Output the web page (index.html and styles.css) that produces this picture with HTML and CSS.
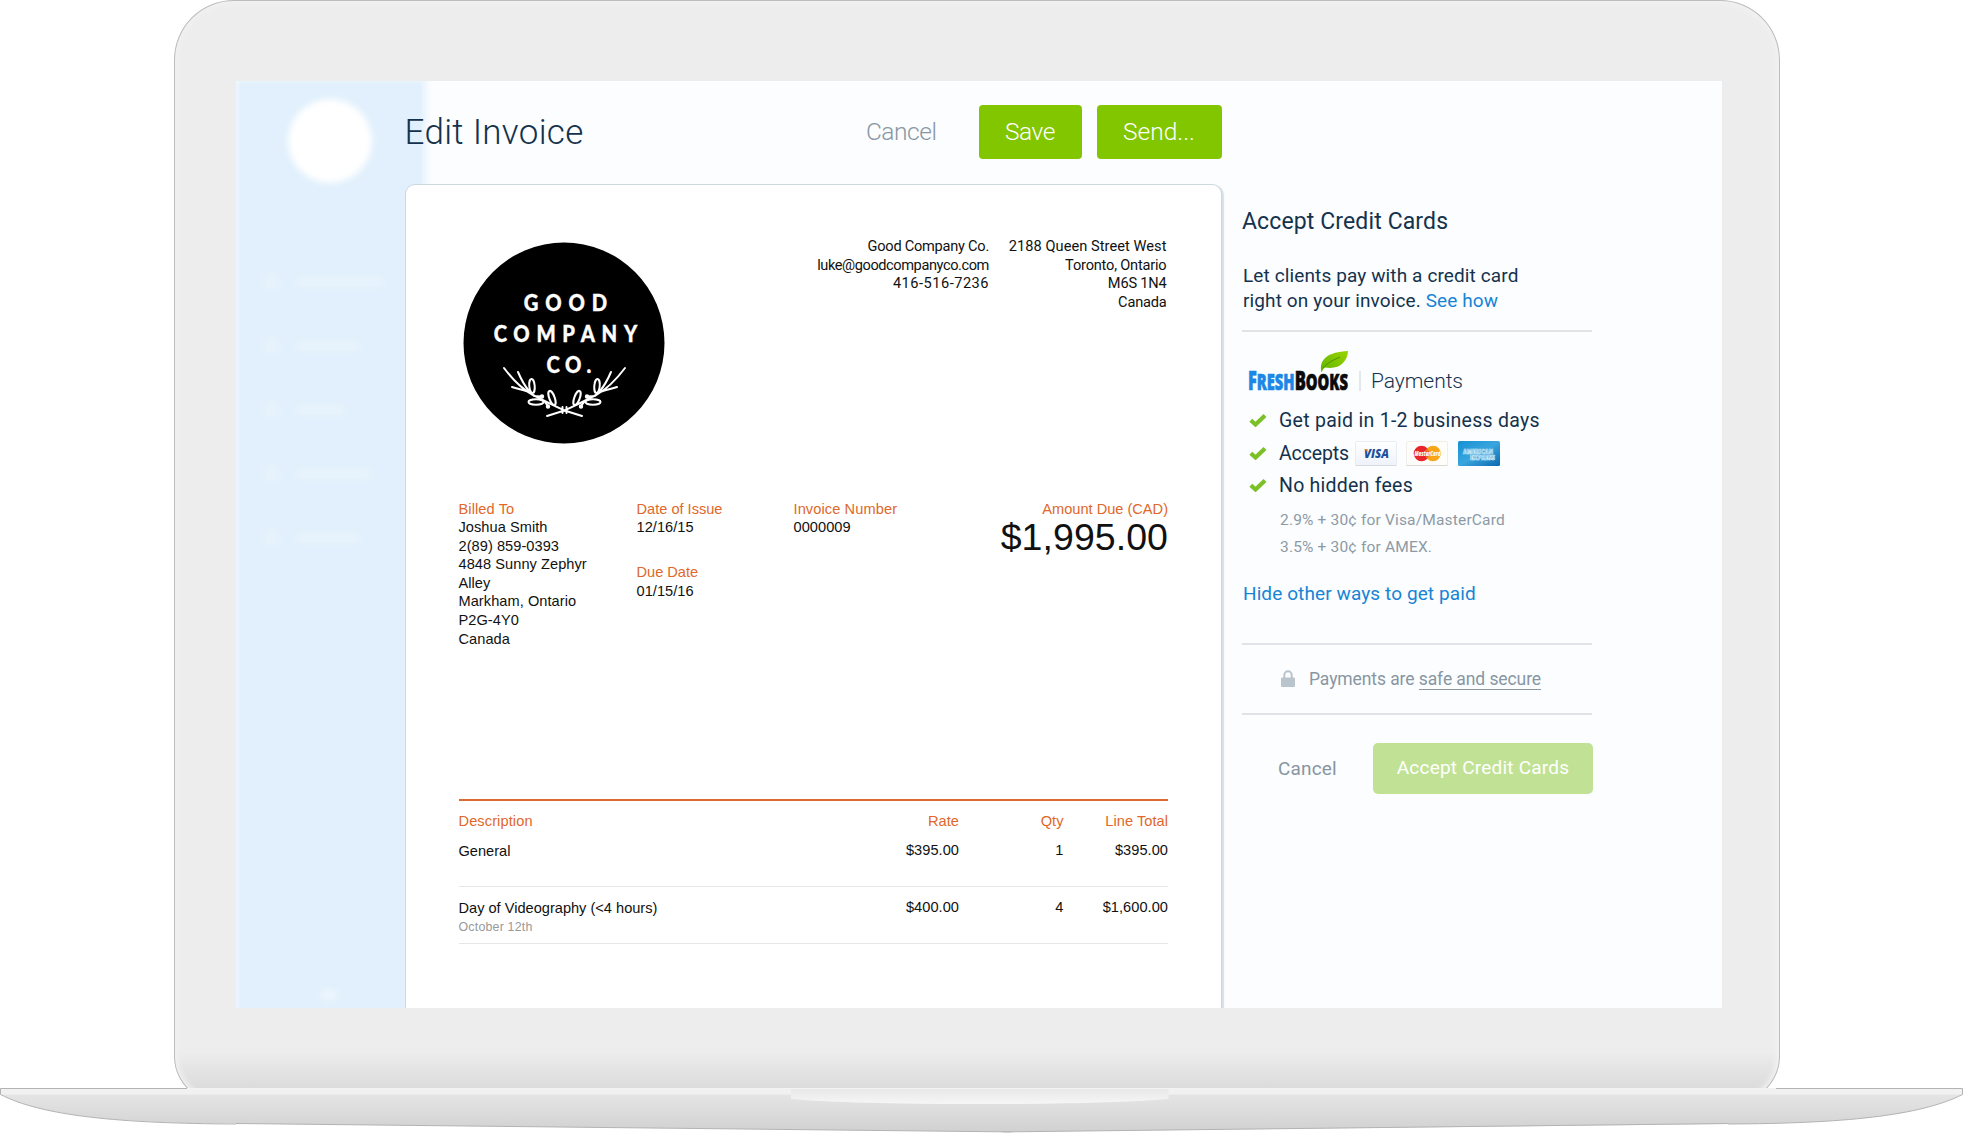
FILE: index.html
```html
<!DOCTYPE html>
<html lang="en">
<head>
<meta charset="utf-8">
<title>Edit Invoice</title>
<link rel="stylesheet" href="styles.css">
</head>
<body>
<div class="laptop">
  <div class="lid-clip">
    <div class="lid">
      <div class="screen">
        <nav class="sidebar">
          <span class="avatar"></span>
          <ul class="nav">
            <li><i></i><b class="w1"></b></li>
            <li><i></i><b class="w2"></b></li>
            <li><i></i><b class="w3"></b></li>
            <li><i></i><b class="w4"></b></li>
            <li><i></i><b class="w2"></b></li>
          </ul>
          <span class="toggle"></span>
        </nav>

        <main class="main">
          <header class="topbar">
            <h1>Edit Invoice</h1>
            <a class="cancel">Cancel</a>
            <button class="btn save">Save</button>
            <button class="btn send">Send...</button>
          </header>

          <section class="invoice">
            <div class="company">
              <svg class="logo" width="202" height="202" viewBox="-1 -1 202 202">
                <circle cx="100" cy="100" r="100.5" fill="#000"/>
                <g fill="#fff" stroke="#fff" stroke-width=".4" font-family="Lato, sans-serif" font-weight="900" font-size="23.5" transform="scale(.86 1)">
                  <text x="69.500" y="68.500" textLength="97">GOOD</text>
                  <text x="34.500" y="99.500" textLength="167">COMPANY</text>
                  <text x="96" y="130" textLength="52">CO.</text>
                </g>
                <g fill="none" stroke="#fff" stroke-width="2" stroke-linecap="round">
                  <g id="branch">
                    <path d="M40 125C49 137 58 146 69 152C80 158 89 162 99 167L118 173M54 129C57 136 60 142 65 148M48 144C54 146 60 147 65 149M70 153L78 153.5M80 158L84 163"/>
                    <ellipse cx="68" cy="143" rx="2.700" ry="7" transform="rotate(-5 68 143)"/>
                    <ellipse cx="72" cy="159" rx="7.500" ry="2.700"/>
                    <ellipse cx="88" cy="155" rx="2.700" ry="7.500" transform="rotate(-20 88 155)"/>
                    <circle cx="78" cy="153.500" r="1.200" fill="#fff"/>
                    <circle cx="84" cy="163.500" r="1.200" fill="#fff"/>
                  </g>
                  <use href="#branch" transform="matrix(-1 0 0 1 201 0)"/>
                  <path d="M98.500 164V170M102.500 164V170"/>
                </g>
              </svg>
              <address class="contact">
                <span class="n1">Good Company Co.</span>
                <span class="n2">luke@goodcompanyco.com</span>
                <span class="n3">416-516-7236</span>
              </address>
              <address class="street">
                <span>2188 Queen Street West</span>
                <span>Toronto, Ontario</span>
                <span>M6S 1N4</span>
                <span>Canada</span>
              </address>
            </div>

            <div class="details">
              <div class="field client">
                <h2>Billed To</h2>
                <p>Joshua Smith<br>2(89) 859-0393<br>4848 Sunny Zephyr<br>Alley<br>Markham, Ontario<br>P2G-4Y0<br>Canada</p>
              </div>
              <div class="dates">
                <div class="field"><h2>Date of Issue</h2><p>12/16/15</p></div>
                <div class="field"><h2>Due Date</h2><p>01/15/16</p></div>
              </div>
              <div class="field"><h2>Invoice Number</h2><p>0000009</p></div>
              <div class="field amount"><h2>Amount Due (CAD)</h2><p>$1,995.00</p></div>
            </div>

            <div class="lines">
              <div class="row head"><span>Description</span><span>Rate</span><span>Qty</span><span>Line Total</span></div>
              <div class="row first"><span>General</span><span>$395.00</span><span>1</span><span>$395.00</span></div>
              <div class="row second"><span>Day of Videography (&lt;4 hours)<small>October 12th</small></span><span>$400.00</span><span>4</span><span>$1,600.00</span></div>
            </div>
          </section>
        </main>

        <aside class="panel">
          <h2 class="title">Accept Credit Cards</h2>
          <p class="intro">Let clients pay with a credit card<br>right on your invoice. <a>See how</a></p>
          <hr>
          <div class="brand">
            <svg width="102" height="44" viewBox="0 0 102 44">
              <defs><linearGradient id="leaf" x1="0" y1="1" x2="1" y2="0"><stop offset="0" stop-color="#5fb400"/><stop offset="1" stop-color="#9ad400"/></linearGradient></defs>
              <text x="0" y="39.500" textLength="100" lengthAdjust="spacingAndGlyphs" font-family="'Open Sans', sans-serif" font-weight="800" stroke-width=".7" font-size="23.500"><tspan fill="#1c87e5" stroke="#1c87e5"><tspan font-size="26">F</tspan>RESH</tspan><tspan fill="#0a0a0a" stroke="#0a0a0a"><tspan font-size="26.500">B</tspan>OOKS</tspan></text>
              <path d="M73 20C72 9 80 2 100 1C99.500 12 91 20 77 17.500Q75 18.500 73.500 22.500Z" fill="url(#leaf)"/>
              <path d="M75 18C80 12 85 10.500 92 7" fill="none" stroke="#4a9400" stroke-width="1"/>
            </svg>
            <span class="product">Payments</span>
          </div>
          <ul class="perks">
            <li><svg class="check" viewBox="0 0 18 14"><path d="M1.800 7.200L6.500 11.500L16 2.500"/></svg><span class="p1">Get paid in 1-2 business days</span></li>
            <li><svg class="check" viewBox="0 0 18 14"><path d="M1.800 7.200L6.500 11.500L16 2.500"/></svg><span class="p2">Accepts</span>
              <span class="cards">
                <svg width="42" height="25" viewBox="0 0 42 25"><defs><linearGradient id="vs" x2="0" y2="1"><stop offset="0" stop-color="#fff"/><stop offset="1" stop-color="#eef2f9"/></linearGradient></defs><rect x=".5" y=".5" width="41" height="24" rx="1.500" fill="url(#vs)" stroke="#e9ecf2"/><path d="M.5 24.500H41.500" stroke="#d5dae3"/><text x="9" y="17.300" textLength="25" lengthAdjust="spacingAndGlyphs" font-family="'Open Sans', sans-serif" font-style="italic" font-weight="800" font-size="12.500" fill="#1c4f9c">VISA</text><path d="M9 8.300H12.500L13.500 11Z" fill="#f0a020"/></svg>
                <svg width="42" height="25" viewBox="0 0 42 25"><rect x=".5" y=".5" width="41" height="24" rx="1.500" fill="#fffdfa" stroke="#f1edea"/><path d="M.5 24.500H41.500" stroke="#ddd8d4"/><circle cx="15.500" cy="12.500" r="7.800" fill="#e8252b"/><circle cx="27" cy="12.500" r="7.800" fill="#f9a51a"/><path d="M21.250 7.200A7.800 7.800 0 0 1 21.250 17.800A7.800 7.800 0 0 1 21.250 7.200Z" fill="#ef6a20"/><text x="8.500" y="15" textLength="26" lengthAdjust="spacingAndGlyphs" font-family="'Open Sans', sans-serif" font-style="italic" font-weight="800" font-size="6.500" fill="#fff">MasterCard</text></svg>
                <svg width="42" height="25" viewBox="0 0 42 25"><defs><linearGradient id="ax" x2="1" y2="1"><stop offset="0" stop-color="#1590d2"/><stop offset=".5" stop-color="#3aa5de"/><stop offset="1" stop-color="#0a68b0"/></linearGradient></defs><rect width="42" height="25" rx="1.500" fill="url(#ax)"/><g font-family="'Open Sans', sans-serif" font-weight="800" font-size="6.800" fill="#2b93cf" stroke="#d6edf9" stroke-width=".7"><text x="5" y="12.500" textLength="30" lengthAdjust="spacingAndGlyphs">AMERICAN</text><text x="12" y="18.800" textLength="25" lengthAdjust="spacingAndGlyphs">EXPRESS</text></g></svg>
              </span>
            </li>
            <li><svg class="check" viewBox="0 0 18 14"><path d="M1.800 7.200L6.500 11.500L16 2.500"/></svg><span class="p3">No hidden fees</span></li>
          </ul>
          <p class="fees">2.9% + 30¢ for Visa/MasterCard<br>3.5% + 30¢ for AMEX.</p>
          <a class="hide">Hide other ways to get paid</a>
          <hr>
          <p class="secure">
            <svg width="14" height="18" viewBox="0 0 14 18"><path d="M3.300 8V5A3.700 3.700 0 0 1 10.700 5V8" fill="none" stroke="#b9c4cc" stroke-width="2"/><rect y="7.500" width="14" height="9.500" rx="1.200" fill="#b9c4cc"/></svg>
            <span>Payments are <u>safe and secure</u></span>
          </p>
          <hr>
          <div class="actions">
            <a>Cancel</a>
            <button class="accept">Accept Credit Cards</button>
          </div>
        </aside>
      </div>
    </div>
  </div>

  <svg class="base" width="1963" height="45" viewBox="0 0 1963 45">
    <defs>
      <linearGradient id="body" x2="0" y2="1"><stop offset="0" stop-color="#e8e8e8"/><stop offset=".85" stop-color="#d4d4d4"/><stop offset="1" stop-color="#d0d0d0"/></linearGradient>
      <linearGradient id="notch" x2="0" y2="1"><stop offset="0" stop-color="#e8e8e8"/><stop offset="1" stop-color="#f6f6f6"/></linearGradient>
    </defs>
    <path d="M.5.5H1962.500V6.500C1920 28 1843 35.500 1728 36L1014 43.800Q1008 45.500 1000 43.800L236 35.500C120 35.500 42 28 .5 6.500Z" fill="url(#body)"/>
    <path d="M1 1H1962V6.500H1Z" fill="#f1f1f1"/>
    <path d="M791 1H1168.500V11Q1110 16 980 16Q850 16 791 11Z" fill="url(#notch)"/>
    <path d="M187 .5H.5V6.500C42 28 120 35.500 236 36M1776 .5H1962.500V6.500C1920 28 1843 35.500 1728 36" fill="none" stroke="#b3b3b3"/>
    <path d="M236 35.500L1000 43.800H1014L1728 35.500" fill="none" stroke="#b3b3b3"/>
  </svg>
</div>
</body>
</html>
```
FILE: styles.css
```css
* { box-sizing: border-box; }
body { margin: 0; background: #fff; font-family: Roboto, "Liberation Sans", sans-serif; color: #14324c; }
h1, h2, p, ul, hr { margin: 0; padding: 0; font-weight: 400; }
ul { list-style: none; }
button { border: 0; padding: 0; font-family: inherit; color: #fff; }
address { font-style: normal; }

.laptop { width: 1963px; height: 1133px; overflow: hidden; }
.lid-clip { height: 1088px; overflow: hidden; padding-left: 174px; }
.lid {
  width: 1606px; height: 1113px; padding: 80px 57px 0 61px;
  border: 1px solid #bdbdbd; border-radius: 60px 60px 75px 75px / 60px 60px 56px 56px;
  background: linear-gradient(#ededed 1050px, #dbdbdb 1088px);
  box-shadow: inset 0 0 5px 3px #f1f1f1;
}
.base { display: block; }

.screen { display: flex; width: 1486px; height: 927px; background: #fbfdff; overflow: hidden; }

.sidebar {
  flex: none; display: flex; flex-direction: column; width: 189px; height: 935px;
  margin: -2px -19px 0 0; padding: 20px 0 0 26px;
  background: #e1f0fc; filter: blur(3px);
}
.avatar { width: 84px; height: 84px; margin-left: 26px; border-radius: 50%; background: #fff; }
.nav { margin-top: 67px; }
.nav li { display: flex; align-items: center; height: 64px; gap: 17px; }
.nav i { width: 18px; height: 18px; border-radius: 6px; background: #e6f2fc; }
.nav b { height: 10px; background: #e8f3fc; }
.nav .w1 { width: 86px; }
.nav .w2 { width: 62px; }
.nav .w3 { width: 48px; }
.nav .w4 { width: 74px; }
.toggle { width: 18px; height: 12px; margin: 419px 0 0 58px; background: #ebf5fd; border-radius: 6px; }

.main { position: relative; flex: none; width: 817px; display: flex; flex-direction: column; margin-left: -1.500px; }
.topbar { flex: none; display: flex; align-items: center; height: 103px; padding-bottom: 2px; }
.topbar h1 { flex: 1; font-size: 35px; font-weight: 300; line-height: 42px; padding-top: 3px; letter-spacing: .3px; }
.cancel { margin-right: 42px; font-size: 24.500px; font-weight: 300; letter-spacing: -.45px; color: #8896a2; }
.btn { height: 54px; border-radius: 4px; background: #82c600; font-size: 24.500px; font-weight: 300; }
.save { width: 103px; margin-right: 15px; letter-spacing: -.4px; }
.send { width: 125px; }

.invoice {
  flex: none; height: 840px; padding: 52px 52.500px 0 53px; color: #111;
  background: #fff; border: 1px solid #ccd8e0; border-radius: 10px 10px 0 0; box-shadow: 2px 1px 1px #d9dfe5;
  font-family: "Liberation Sans", Arial, sans-serif; font-size: 14.600px; line-height: 18.600px; letter-spacing: .05px;
}
.company { display: flex; height: 262.500px; font-family: Roboto, sans-serif; }
.logo { margin: 4.500px auto 0 4px; flex: none; }
.contact, .street { display: flex; flex-direction: column; text-align: right; }
.contact .n1 { letter-spacing: -.25px; }
.contact .n2 { letter-spacing: -.42px; }
.contact .n3 { letter-spacing: .5px; }
.street { width: 179px; padding-right: 1.500px; }
.street span + span { letter-spacing: -.2px; }

.details { display: grid; grid-template-columns: 178px 157px 174px 1fr; height: 299.500px; }
.client { width: 140px; }
.field h2 { font-size: 14.600px; line-height: 18.600px; color: #e0682a; white-space: nowrap; letter-spacing: .1px; }
.dates { display: flex; flex-direction: column; gap: 26.800px; }
.dates .field h2 { letter-spacing: 0; }
.amount { text-align: right; }
.amount .field h2, .amount h2 { letter-spacing: 0; }
.amount p { margin-top: 1px; font-size: 37.500px; line-height: 37px; }

.lines { border-top: 2.500px solid #dc6b33; }
.row { display: grid; grid-template-columns: 1fr 100px 104.500px 104.500px; text-align: right; }
.row span:first-child { text-align: left; padding-top: 1px; letter-spacing: 0; }
.row small { display: block; font-size: 12.400px; line-height: 18.600px; color: #999; letter-spacing: .2px; }
.head { padding-top: 10.500px; height: 38.500px; color: #e0682a; }
.head span:first-child { padding: 0; letter-spacing: .1px; }
.first { padding-top: 1px; height: 47px; border-bottom: 1px solid #e6e6e6; }
.second { padding-top: 11.500px; height: 57px; border-bottom: 1px solid #e6e6e6; }

.panel { flex: none; width: 350px; margin-left: 20.500px; padding-top: 125px; display: flex; flex-direction: column; }
.title { font-size: 23px; line-height: 31px; letter-spacing: .12px; }
.intro { margin: 25.500px 0 16px 1px; font-size: 19px; line-height: 25.600px; letter-spacing: .12px; white-space: nowrap; }
.intro a, .hide { color: #1784d4; }
hr { flex: none; height: 2px; border: 0; background: #e0e4e8; }
.brand { display: flex; height: 72.500px; padding: 18.500px 0 0 6px; }
.product { height: 20px; margin: 21px 0 0 9px; padding-left: 10px; border-left: 2px solid #e3e8ec; font-size: 21px; line-height: 20px; font-weight: 300; letter-spacing: -.05px; }
.perks li { display: flex; align-items: center; height: 32.700px; padding-left: 7px; font-size: 19.500px; white-space: nowrap; }
.check { width: 18px; height: 14px; margin: -1px 12px 0 0; fill: none; stroke: #7cc028; stroke-width: 4.200; }
.p1 { letter-spacing: .28px; }
.p2 { letter-spacing: -.15px; }
.p3 { letter-spacing: .24px; }
.cards { display: flex; gap: 9.500px; margin-left: 6px; }
.fees { margin: 4.800px 0 0 38px; font-size: 15.500px; line-height: 27px; letter-spacing: .17px; color: #8d9aa5; }
.hide { margin: 20px 0 36px 1px; font-size: 19px; line-height: 26px; letter-spacing: .1px; }
.secure { display: flex; align-items: center; gap: 14px; height: 68px; padding-left: 39px; font-size: 17.500px; letter-spacing: -.09px; color: #8896a2; }
.secure u { text-decoration: none; border-bottom: 1px solid #8896a2; }
.actions { display: flex; align-items: center; margin: 28px -1px 0 0; padding-left: 36px; font-size: 19px; letter-spacing: .15px; color: #8896a2; }
.accept { width: 220px; height: 51px; margin-left: auto; padding-bottom: 2px; border-radius: 5px; background: #c1e294; font-size: 19px; letter-spacing: .22px; }
```
